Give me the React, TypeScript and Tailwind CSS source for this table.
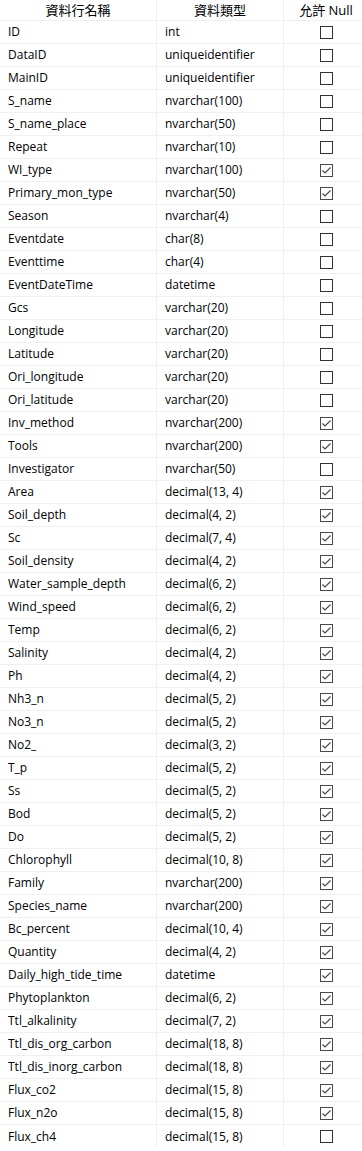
import React from 'react';

type Col = { name: string; type: string; nullable: boolean };

const columns: Col[] = [
  { name: 'ID', type: 'int', nullable: false },
  { name: 'DataID', type: 'uniqueidentifier', nullable: false },
  { name: 'MainID', type: 'uniqueidentifier', nullable: false },
  { name: 'S_name', type: 'nvarchar(100)', nullable: false },
  { name: 'S_name_place', type: 'nvarchar(50)', nullable: false },
  { name: 'Repeat', type: 'nvarchar(10)', nullable: false },
  { name: 'WI_type', type: 'nvarchar(100)', nullable: true },
  { name: 'Primary_mon_type', type: 'nvarchar(50)', nullable: true },
  { name: 'Season', type: 'nvarchar(4)', nullable: false },
  { name: 'Eventdate', type: 'char(8)', nullable: false },
  { name: 'Eventtime', type: 'char(4)', nullable: false },
  { name: 'EventDateTime', type: 'datetime', nullable: false },
  { name: 'Gcs', type: 'varchar(20)', nullable: false },
  { name: 'Longitude', type: 'varchar(20)', nullable: false },
  { name: 'Latitude', type: 'varchar(20)', nullable: false },
  { name: 'Ori_longitude', type: 'varchar(20)', nullable: false },
  { name: 'Ori_latitude', type: 'varchar(20)', nullable: false },
  { name: 'Inv_method', type: 'nvarchar(200)', nullable: true },
  { name: 'Tools', type: 'nvarchar(200)', nullable: true },
  { name: 'Investigator', type: 'nvarchar(50)', nullable: false },
  { name: 'Area', type: 'decimal(13, 4)', nullable: true },
  { name: 'Soil_depth', type: 'decimal(4, 2)', nullable: true },
  { name: 'Sc', type: 'decimal(7, 4)', nullable: true },
  { name: 'Soil_density', type: 'decimal(4, 2)', nullable: true },
  { name: 'Water_sample_depth', type: 'decimal(6, 2)', nullable: true },
  { name: 'Wind_speed', type: 'decimal(6, 2)', nullable: true },
  { name: 'Temp', type: 'decimal(6, 2)', nullable: true },
  { name: 'Salinity', type: 'decimal(4, 2)', nullable: true },
  { name: 'Ph', type: 'decimal(4, 2)', nullable: true },
  { name: 'Nh3_n', type: 'decimal(5, 2)', nullable: true },
  { name: 'No3_n', type: 'decimal(5, 2)', nullable: true },
  { name: 'No2_', type: 'decimal(3, 2)', nullable: true },
  { name: 'T_p', type: 'decimal(5, 2)', nullable: true },
  { name: 'Ss', type: 'decimal(5, 2)', nullable: true },
  { name: 'Bod', type: 'decimal(5, 2)', nullable: true },
  { name: 'Do', type: 'decimal(5, 2)', nullable: true },
  { name: 'Chlorophyll', type: 'decimal(10, 8)', nullable: true },
  { name: 'Family', type: 'nvarchar(200)', nullable: true },
  { name: 'Species_name', type: 'nvarchar(200)', nullable: true },
  { name: 'Bc_percent', type: 'decimal(10, 4)', nullable: true },
  { name: 'Quantity', type: 'decimal(4, 2)', nullable: true },
  { name: 'Daily_high_tide_time', type: 'datetime', nullable: true },
  { name: 'Phytoplankton', type: 'decimal(6, 2)', nullable: true },
  { name: 'Ttl_alkalinity', type: 'decimal(7, 2)', nullable: true },
  { name: 'Ttl_dis_org_carbon', type: 'decimal(18, 8)', nullable: true },
  { name: 'Ttl_dis_inorg_carbon', type: 'decimal(18, 8)', nullable: true },
  { name: 'Flux_co2', type: 'decimal(15, 8)', nullable: true },
  { name: 'Flux_n2o', type: 'decimal(15, 8)', nullable: true },
  { name: 'Flux_ch4', type: 'decimal(15, 8)', nullable: false },
];

const CheckBox = ({ checked }: { checked: boolean }) =>
  checked ? (
    <svg width="13" height="13" viewBox="0 0 13 13" className="block">
      <rect x="0.5" y="0.5" width="12" height="12" fill="white" stroke="#4a4a4a" />
      <path d="M2.5 6.5 L5 9 L10.5 3.5" fill="none" stroke="#4a4a4a" strokeWidth="1.2" />
    </svg>
  ) : (
    <svg width="13" height="13" viewBox="0 0 13 13" className="block">
      <rect x="0.5" y="0.5" width="12" height="12" fill="white" stroke="#333333" />
    </svg>
  );

const App = () => {
  return (
    <div
      className="w-[362px] h-[1151px] overflow-hidden bg-white text-[12px] text-black"
      style={{ fontFamily: '"Open Sans", "Noto Sans CJK TC", sans-serif' }}
    >
      <div className="flex h-[21px] border-b border-[#f0f0f0] w-[368px]">
        <div className="w-[157px] border-r border-[#f0f0f0] flex items-center justify-center leading-none text-[13px]">
          資料行名稱
        </div>
        <div className="w-[127px] border-r border-[#f0f0f0] flex items-center justify-center leading-none text-[13px]">
          資料類型
        </div>
        <div className="w-[84px] flex items-center justify-center leading-none text-[13px]">允許 Null</div>
      </div>
      {columns.map((c, i) => (
        <div
          key={c.name}
          className={`flex h-[23px] w-[368px] ${i < columns.length - 1 ? 'border-b border-[#f0f0f0]' : ''}`}
        >
          <div className="w-[157px] border-r border-[#f0f0f0] flex items-center pl-[8px] leading-none whitespace-nowrap">
            {c.name}
          </div>
          <div className="w-[127px] border-r border-[#f0f0f0] flex items-center pl-[8px] leading-none whitespace-nowrap">
            {c.type}
          </div>
          <div className="w-[84px] flex items-center justify-center">
            <CheckBox checked={c.nullable} />
          </div>
        </div>
      ))}
    </div>
  );
};

export default App;
